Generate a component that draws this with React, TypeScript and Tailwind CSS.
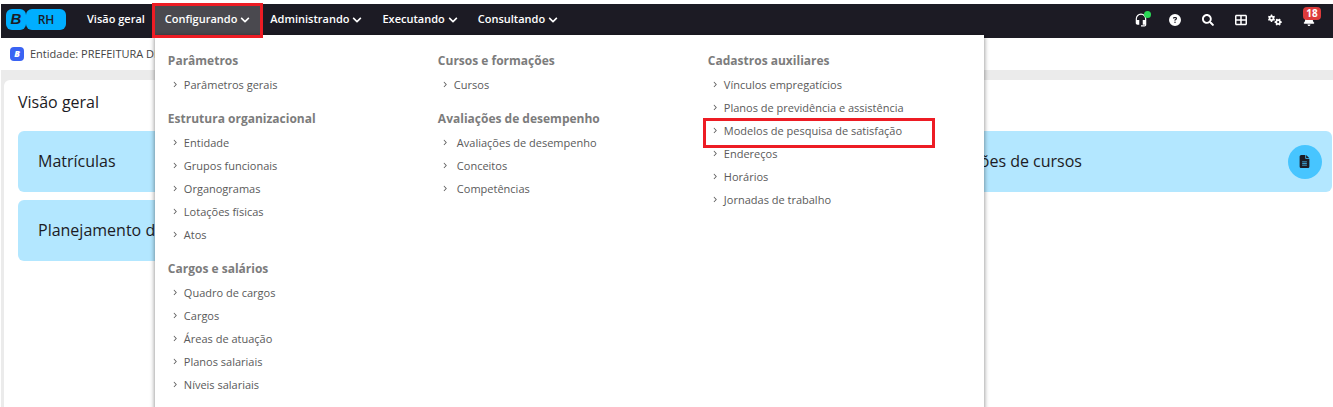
import React from "react";
import { FaBell, FaChevronDown, FaSearch } from "react-icons/fa";
import { FaAngleRight, FaCircleQuestion, FaFileLines, FaGears, FaTableCellsLarge } from "react-icons/fa6";
import { MdHeadsetMic } from "react-icons/md";

type Group = { title: string; items: string[]; wide?: boolean };

const columns: Group[][] = [
  [
    { title: "Parâmetros", items: ["Parâmetros gerais"] },
    {
      title: "Estrutura organizacional",
      items: ["Entidade", "Grupos funcionais", "Organogramas", "Lotações físicas", "Atos"],
    },
    {
      title: "Cargos e salários",
      items: ["Quadro de cargos", "Cargos", "Áreas de atuação", "Planos salariais", "Níveis salariais"],
    },
  ],
  [
    { title: "Cursos e formações", items: ["Cursos"] },
    {
      title: "Avaliações de desempenho",
      items: ["Avaliações de desempenho", "Conceitos", "Competências"],
      wide: true,
    },
  ],
  [
    {
      title: "Cadastros auxiliares",
      items: [
        "Vínculos empregatícios",
        "Planos de previdência e assistência",
        "Modelos de pesquisa de satisfação",
        "Endereços",
        "Horários",
        "Jornadas de trabalho",
      ],
    },
  ],
];

const highlighted = "Modelos de pesquisa de satisfação";

function MenuGroup({ title, items, wide }: Group) {
  return (
    <section>
      <h3 className="text-[12px] font-bold leading-6 text-[#7c7c7c]">{title}</h3>
      <ul>
        {items.map((item) => (
          <li key={item} className="relative w-fit">
            <a href="#" className={`flex items-center pl-[3px] text-[11px] leading-[23px] text-[#5a5a5a] ${wide ? "gap-2" : "gap-[5px]"}`}>
              <FaAngleRight className="h-[7px] w-2" />
              {item}
            </a>
            {item === highlighted && (
              <span className="pointer-events-none absolute -top-px -right-[33px] -bottom-[6px] -left-[5px] border-3 border-[#ed1c24]" />
            )}
          </li>
        ))}
      </ul>
    </section>
  );
}

function ConfigMenu() {
  return (
    <div className="absolute top-full left-0 z-10 grid h-screen w-[829px] grid-cols-3 rounded-b bg-white pt-[14px] pr-[6px] pl-[13px] font-normal shadow-[0_1px_5px_rgba(0,0,0,0.5)]">
      {columns.map((groups) => (
        <div key={groups[0].title} className="flex flex-col gap-[11px]">
          {groups.map((group) => (
            <MenuGroup key={group.title} {...group} />
          ))}
        </div>
      ))}
    </div>
  );
}

function NavButton({ label, active }: { label: string; active?: boolean }) {
  return (
    <button
      className={`flex h-[31px] items-center gap-[3px] px-[10px] ${active ? "bg-[#4a494f]" : ""}`}
      aria-expanded={!!active}
    >
      {label}
      <FaChevronDown className="size-[10px]" />
    </button>
  );
}

function TopBar() {
  return (
    <header className="flex h-[34px] justify-between bg-[#1c1b24] text-[11px] font-semibold text-white">
      <div className="flex">
        <a href="#" aria-label="RH" className="mt-[5px] ml-[5px] flex h-[21px] text-[#1c1b24]">
          <span className="flex w-5 items-center justify-center rounded-md bg-[#00aeff] font-['Liberation_Sans',sans-serif] text-[15px] font-bold italic">
            B
          </span>
          <span className="flex w-10 items-center justify-center rounded-md bg-[#00aeff] text-[12px] font-semibold">RH</span>
        </a>
        <nav className="ml-[11px] flex items-start">
          <a href="#" className="flex h-[31px] items-center px-[10px]">Visão geral</a>
          <div className="relative">
            <NavButton label="Configurando" active />
            <ConfigMenu />
            <span className="pointer-events-none absolute -inset-x-[3px] -top-px -bottom-[3px] z-20 border-3 border-[#ed1c24]" />
          </div>
          <NavButton label="Administrando" />
          <NavButton label="Executando" />
          <NavButton label="Consultando" />
        </nav>
      </div>
      <div className="mr-[18px] flex h-[31px] items-center gap-[21px]">
        <button aria-label="Suporte" className="relative">
          <MdHeadsetMic className="size-[14px]" />
          <span className="absolute -top-[2px] -right-[3px] size-[7px] rounded-full bg-[#2bd956]" />
        </button>
        <button aria-label="Ajuda"><FaCircleQuestion className="size-3" /></button>
        <button aria-label="Pesquisar"><FaSearch className="size-3" /></button>
        <button aria-label="Aplicações"><FaTableCellsLarge className="size-3" /></button>
        <button aria-label="Configurações"><FaGears className="size-[14px]" /></button>
        <button aria-label="Notificações" className="relative">
          <FaBell className="size-3" />
          <span className="absolute -top-[7px] -right-[6px] flex h-[13px] w-[18px] items-center justify-center rounded bg-[#dd3b3b] text-[10px] font-bold">
            18
          </span>
        </button>
      </div>
    </header>
  );
}

function Card({ title, className = "" }: { title: string; className?: string }) {
  return (
    <div className={`flex h-[61px] items-center justify-between rounded-md bg-[#b3e7ff] pr-[10px] pl-5 text-base ${className}`}>
      <span className="pb-0.5">{title}</span>
      <button aria-label={title} className="flex size-[34px] items-center justify-center rounded-full bg-[#47c5ff]">
        <FaFileLines className="size-[13px]" />
      </button>
    </div>
  );
}

export default function App() {
  return (
    <div className="flex h-screen flex-col overflow-hidden bg-white pt-1 pl-px font-['Open_Sans',sans-serif] text-[#1c1b24]">
      <TopBar />
      <div className="flex h-8 shrink-0 items-center gap-[6px] pl-[9px] text-[11px] text-[#444]">
        <span className="flex size-[14px] items-center justify-center rounded bg-[#3a63f3] text-[9px] font-extrabold text-white italic">B</span>
        Entidade: PREFEITURA DE
      </div>
      <div className="flex grow flex-col bg-[#ebebeb] pt-[10px] pl-[3px]">
        <main className="grow rounded-tl-md bg-white pr-px pl-[14px]">
          <h1 className="pt-[10px] pb-[17px] text-base">Visão geral</h1>
          <div className="grid grid-cols-3 gap-2">
            <Card title="Matrículas" />
            <Card title="Solicitações de cursos" className="col-start-3" />
            <Card title="Planejamento de" />
          </div>
        </main>
      </div>
    </div>
  );
}
